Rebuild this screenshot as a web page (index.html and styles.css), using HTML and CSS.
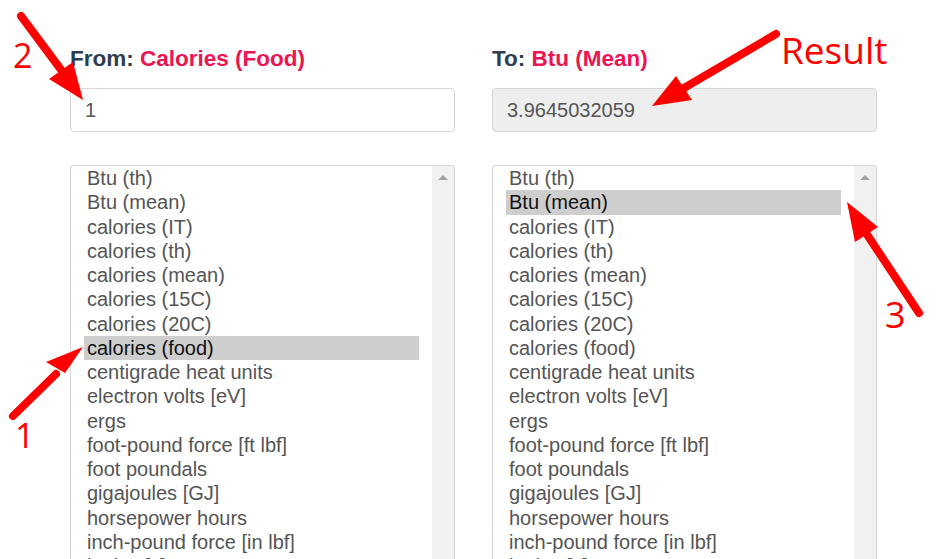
FILE: index.html
```html
<!DOCTYPE html>
<html lang="en">
<head>
    <meta charset="UTF-8">
    <meta name="viewport" content="width=device-width, initial-scale=1.0">
    <title>Energy Converter</title>
    <link rel="stylesheet" href="styles.css">
</head>
<body>
    <div class="converter">
        <div class="column">
            <div class="unit-label">From: <span class="unit-name">Calories (Food)</span></div>
            <input class="unit-input" type="text" value="1">
            <div class="unit-list">
                <div class="options">
                    <div class="option">Btu (th)</div>
                    <div class="option">Btu (mean)</div>
                    <div class="option">calories (IT)</div>
                    <div class="option">calories (th)</div>
                    <div class="option">calories (mean)</div>
                    <div class="option">calories (15C)</div>
                    <div class="option">calories (20C)</div>
                    <div class="option selected">calories (food)</div>
                    <div class="option">centigrade heat units</div>
                    <div class="option">electron volts [eV]</div>
                    <div class="option">ergs</div>
                    <div class="option">foot-pound force [ft lbf]</div>
                    <div class="option">foot poundals</div>
                    <div class="option">gigajoules [GJ]</div>
                    <div class="option">horsepower hours</div>
                    <div class="option">inch-pound force [in lbf]</div>
                    <div class="option">joules [J]</div>
                </div>
                <div class="scrollbar"><span class="scroll-up"></span></div>
            </div>
        </div>

        <div class="column">
            <div class="unit-label">To: <span class="unit-name">Btu (Mean)</span></div>
            <input class="unit-input result" type="text" value="3.9645032059" readonly>
            <div class="unit-list">
                <div class="options">
                    <div class="option">Btu (th)</div>
                    <div class="option selected">Btu (mean)</div>
                    <div class="option">calories (IT)</div>
                    <div class="option">calories (th)</div>
                    <div class="option">calories (mean)</div>
                    <div class="option">calories (15C)</div>
                    <div class="option">calories (20C)</div>
                    <div class="option">calories (food)</div>
                    <div class="option">centigrade heat units</div>
                    <div class="option">electron volts [eV]</div>
                    <div class="option">ergs</div>
                    <div class="option">foot-pound force [ft lbf]</div>
                    <div class="option">foot poundals</div>
                    <div class="option">gigajoules [GJ]</div>
                    <div class="option">horsepower hours</div>
                    <div class="option">inch-pound force [in lbf]</div>
                    <div class="option">joules [J]</div>
                </div>
                <div class="scrollbar"><span class="scroll-up"></span></div>
            </div>
        </div>
    </div>

    <!-- annotation arrows drawn over the screenshot -->
    <svg class="annotations" width="943" height="559" viewBox="0 0 943 559">
        <g stroke="#ff0000" stroke-width="8" stroke-linecap="round" fill="#ff0000">
            <line x1="21" y1="16" x2="62" y2="71"/>
            <polygon points="83,100 49,79 73,62" stroke="none"/>

            <line x1="776" y1="34" x2="684" y2="88"/>
            <polygon points="652,106 676,76 692,100" stroke="none"/>

            <line x1="919" y1="313" x2="866" y2="233"/>
            <polygon points="847,202 878,227 855,242" stroke="none"/>

            <line x1="13" y1="416" x2="56" y2="374"/>
            <polygon points="83,347 46,362 65,373" stroke="none"/>
        </g>
        <g fill="#ff0000" class="note">
            <text x="13" y="68" font-size="34">2</text>
            <text x="781" y="64" font-size="37">Result</text>
            <text x="885" y="328" font-size="36">3</text>
            <text x="15" y="448" font-size="34">1</text>
        </g>
    </svg>
</body>
</html>
```

FILE: styles.css
```css
body {
    font-family: "Liberation Sans", Arial, sans-serif;
    margin: 0;
    padding: 0;
    background-color: #fff;
    color: #555;
    overflow: hidden;
    height: 559px;
}
.converter {
    display: flex;
    gap: 37px;
    padding-left: 70px;
}
.column {
    width: 385px;
    display: flex;
    flex-direction: column;
}
.unit-label {
    margin-top: 47px;
    font-size: 22.5px;
    line-height: 24px;
    font-weight: bold;
    color: #2c3e50;
}
.unit-name {
    color: #ec1451;
}
.unit-input {
    box-sizing: border-box;
    margin-top: 17px;
    height: 44px;
    width: 100%;
    padding: 0 14px;
    border: 1px solid #d6d6d6;
    border-radius: 4px;
    font-family: inherit;
    font-size: 20px;
    color: #555;
    background-color: #fff;
    outline: none;
}
.unit-input.result {
    background-color: #eeeeee;
}
.unit-list {
    margin-top: 33px;
    height: 420px;
    border: 1px solid #d6d6d6;
    border-bottom: none;
    border-radius: 4px 4px 0 0;
    display: flex;
    overflow: hidden;
}
.options {
    flex: 1;
    padding: 0 13px;
}
.option {
    height: 24.25px;
    line-height: 24.25px;
    padding-left: 3px;
    font-size: 20px;
    white-space: nowrap;
    color: #555;
}
.option.selected {
    background-color: #cecece;
    color: #111;
}
.scrollbar {
    width: 22px;
    background-color: #f1f1f1;
    display: flex;
    justify-content: center;
    padding-top: 9px;
}
.scroll-up {
    width: 0;
    height: 0;
    border-left: 5px solid transparent;
    border-right: 5px solid transparent;
    border-bottom: 5px solid #a3a3a3;
}
.annotations {
    position: absolute;
    left: 0;
    top: 0;
    pointer-events: none;
}
.note {
    font-family: "Open Sans", sans-serif;
}
```
